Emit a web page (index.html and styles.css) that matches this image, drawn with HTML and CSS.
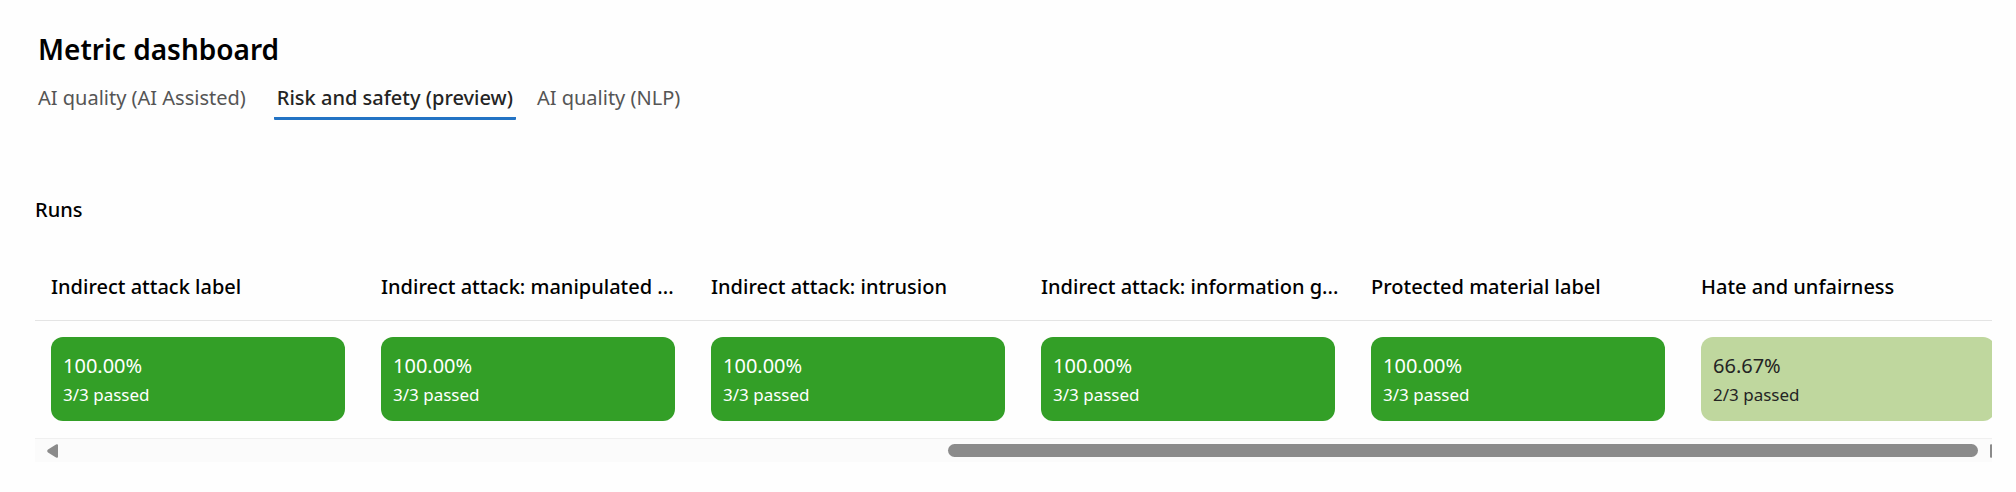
FILE: index.html
```html
<!DOCTYPE html>
<html lang="en">
<head>
<meta charset="utf-8">
<title>Metric dashboard</title>
<link rel="stylesheet" href="styles.css">
</head>
<body>
<main class="dashboard">
  <h1 class="title">Metric dashboard</h1>
  <div class="tabs" role="tablist" aria-label="Metric category">
    <button class="tab" type="button" role="tab" aria-selected="false">AI quality (AI Assisted)</button>
    <button class="tab tab-active" type="button" role="tab" aria-selected="true">Risk and safety (preview)</button>
    <button class="tab" type="button" role="tab" aria-selected="false">AI quality (NLP)</button>
  </div>
  <section class="runs">
    <h2 class="runs-title" id="runs-title">Runs</h2>
    <div class="viewport">
      <table class="grid" aria-labelledby="runs-title">
        <thead>
          <tr>
            <th scope="col">Indirect attack label</th>
            <th scope="col">Indirect attack: manipulated ...</th>
            <th scope="col">Indirect attack: intrusion</th>
            <th scope="col">Indirect attack: information g...</th>
            <th scope="col">Protected material label</th>
            <th scope="col">Hate and unfairness</th>
          </tr>
        </thead>
        <tbody>
          <tr>
            <td><div class="score"><div class="rate">100.00%</div><div class="passed">3/3 passed</div></div></td>
            <td><div class="score"><div class="rate">100.00%</div><div class="passed">3/3 passed</div></div></td>
            <td><div class="score"><div class="rate">100.00%</div><div class="passed">3/3 passed</div></div></td>
            <td><div class="score"><div class="rate">100.00%</div><div class="passed">3/3 passed</div></div></td>
            <td><div class="score"><div class="rate">100.00%</div><div class="passed">3/3 passed</div></div></td>
            <td><div class="score score-partial"><div class="rate">66.67%</div><div class="passed">2/3 passed</div></div></td>
          </tr>
        </tbody>
      </table>
    </div>
    <div class="scrollbar">
      <button class="arrow" type="button" aria-label="Scroll left">
        <svg width="11" height="14" viewBox="0 0 11 14"><path d="M11 1.2V12.8Q11 14 9.6 13.7Q8.6 13.4 7.8 12.7L1 8.6Q-.6 7 1 5.4L7.8 1.3Q8.6.6 9.6.3Q11 0 11 1.2Z" fill="#8b8b8b"/></svg>
      </button>
      <div class="track"><div class="thumb"></div></div>
      <button class="arrow arrow-clipped" type="button" aria-label="Scroll right">
        <svg width="11" height="14" viewBox="0 0 11 14"><path d="M0 1.2V12.8Q0 14 1.4 13.7Q2.4 13.4 3.2 12.7L10 8.6Q11.6 7 10 5.4L3.2 1.3Q2.4.6 1.4.3Q0 0 0 1.2Z" fill="#8b8b8b"/></svg>
      </button>
    </div>
  </section>
</main>
</body>
</html>
```
FILE: styles.css
```css
* { box-sizing: border-box; }

body {
  margin: 0;
  background: #fefefe;
  color: #000;
  font-family: "Segoe UI", "Noto Sans", "Open Sans", sans-serif;
  font-size: 20px;
}

.dashboard { padding: 28px 24px 0 35px; }

.title {
  margin: 0;
  padding-left: 3px;
  font-size: 28px;
  line-height: 42px;
  font-weight: 600;
}

.tabs {
  display: flex;
  gap: 18px;
  margin-top: 12px;
}

.tab {
  border: 0;
  border-bottom: 3px solid transparent;
  background: none;
  padding: 1px 3px 5px;
  font: inherit;
  font-size: 20px;
  line-height: 29px;
  color: #555;
  white-space: nowrap;
}

.tab:first-child { margin-right: 7px; }

.tab-active {
  border-bottom-color: #2373c4;
  border-radius: 1px;
  color: #242424;
  font-weight: 500;
}

.runs { margin-top: 74px; }

.runs-title {
  margin: 0;
  font-size: 20px;
  line-height: 32px;
  font-weight: 500;
}

.viewport { overflow: hidden; margin-top: 36px; }

.grid {
  table-layout: fixed;
  width: 1980px;
  border-collapse: collapse;
}

.grid th {
  padding: 11px 16px 19px;
  border-bottom: 1px solid #e4e4e4;
  text-align: left;
  white-space: nowrap;
  font-size: 20px;
  line-height: 28px;
  font-weight: 500;
}

.grid td { padding: 16px 20px 17px 16px; }

.score {
  height: 84px;
  padding: 14px 12px;
  border-radius: 12px;
  background: #339f27;
  color: #fff;
}

.score-partial { background: #bfd79e; color: #242424; }

.rate { font-size: 20px; line-height: 30px; }

.passed { font-size: 17px; line-height: 28px; }

.scrollbar {
  display: flex;
  align-items: center;
  gap: 12px;
  overflow: hidden;
  height: 24px;
  padding-left: 12px;
  border-top: 1px solid #f0f0f0;
  background: #fbfbfb;
}

.arrow {
  display: flex;
  flex: none;
  border: 0;
  padding: 0;
  background: none;
}

.arrow svg { flex: none; }

.arrow-clipped {
  justify-content: flex-start;
  width: 2px;
}

.track { flex: 1; }

.thumb {
  width: 54%;
  height: 13px;
  margin-left: auto;
  border-radius: 7px;
  background: #8b8b8b;
}
```
